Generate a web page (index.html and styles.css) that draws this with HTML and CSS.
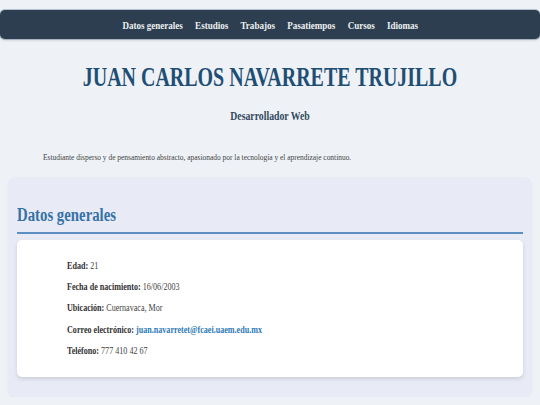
FILE: index.html
```html
<!DOCTYPE html>
<html lang="es">
<head>
<meta charset="utf-8">
<title>Juan Carlos Navarrete Trujillo</title>
<link rel="stylesheet" href="styles.css">
</head>
<body>
<nav class="topnav">
  <ul class="topnav-list">
    <li><a class="topnav-link" href="#datos">Datos generales</a></li>
    <li><a class="topnav-link" href="#estudios">Estudios</a></li>
    <li><a class="topnav-link" href="#trabajos">Trabajos</a></li>
    <li><a class="topnav-link" href="#pasatiempos">Pasatiempos</a></li>
    <li><a class="topnav-link" href="#cursos">Cursos</a></li>
    <li><a class="topnav-link" href="#idiomas">Idiomas</a></li>
  </ul>
</nav>
<header class="hero">
  <h1 class="hero-name">JUAN CARLOS NAVARRETE TRUJILLO</h1>
  <p class="hero-role">Desarrollador Web</p>
  <p class="hero-bio">Estudiante disperso y de pensamiento abstracto, apasionado por la tecnología y el aprendizaje continuo.</p>
</header>
<section class="panel" id="datos">
  <h2 class="panel-title"><span class="panel-title-text">Datos generales</span></h2>
  <div class="card">
    <p class="field"><strong class="field-label">Edad:</strong> 21</p>
    <p class="field"><strong class="field-label">Fecha de nacimiento:</strong> 16/06/2003</p>
    <p class="field"><strong class="field-label">Ubicación:</strong> Cuernavaca, Mor</p>
    <p class="field"><strong class="field-label">Correo electrónico:</strong> <a class="field-link" href="mailto:juan.navarretet@fcaei.uaem.edu.mx">juan.navarretet@fcaei.uaem.edu.mx</a></p>
    <p class="field"><strong class="field-label">Teléfono:</strong> 777 410 42 67</p>
  </div>
</section>
</body>
</html>
```
FILE: styles.css
```css
html, body {
  margin: 0;
  padding: 0;
}
body {
  background: #eef2f7;
  font-family: "Liberation Serif", "Times New Roman", serif;
  color: #333;
  overflow: hidden;
}

/* navigation */
.topnav {
  margin-top: 10px;
  height: 29px;
  background: #2c3e50;
  border-radius: 5px;
  box-shadow: 0 0 0 1px rgba(120, 140, 165, 0.45), 0 1px 3px rgba(0, 0, 0, 0.2);
  display: flex;
  align-items: center;
  justify-content: center;
}
.topnav-list {
  list-style: none;
  margin: 0;
  padding: 0;
  display: flex;
  gap: 15px;
  transform: scaleX(0.82);
}
.topnav-link {
  color: #ecf0f1;
  text-decoration: none;
  font-weight: bold;
  font-size: 11px;
  line-height: 14px;
  display: block;
  padding-top: 1px;
}

/* header */
.hero {
  padding-top: 22px;
}
.hero-name {
  margin: 0;
  font-size: 28px;
  line-height: 32px;
  font-weight: bold;
  color: #1f4e74;
  text-align: center;
  white-space: nowrap;
  transform: scaleX(0.713);
}
.hero-role {
  margin: 15px 0 0;
  font-size: 13px;
  line-height: 16px;
  font-weight: bold;
  color: #34495e;
  text-align: center;
  transform: scaleX(0.75);
}
.hero-bio {
  margin: 27px 0 0;
  padding-left: 43px;
  font-size: 9px;
  line-height: 12px;
  color: #444;
  white-space: nowrap;
  transform: scaleX(0.826);
  transform-origin: 43px center;
}

/* section */
.panel {
  margin: 14px 8px 0;
  padding: 27px 9px 20px;
  background: #e8eaf6;
  border-radius: 8px;
  box-shadow: 0 1px 3px rgba(0, 0, 0, 0.05);
}
.panel-title {
  margin: 0;
  padding-bottom: 6px;
  border-bottom: 2px solid #5b8fc2;
  font-size: 18px;
  line-height: 22px;
  font-weight: bold;
  color: #3672a6;
}
.panel-title-text {
  display: inline-block;
  transform: scaleX(0.822);
  transform-origin: left center;
}
.card {
  margin-top: 6px;
  padding: 20px 20px 20px 50px;
  background: #fff;
  border-radius: 5px;
  box-shadow: 0 2px 4px rgba(0, 0, 0, 0.12);
  display: flex;
  flex-direction: column;
  gap: 9.2px;
}
.field {
  margin: 0;
  font-size: 9.3px;
  line-height: 12px;
  color: #444;
  white-space: nowrap;
  transform: scaleX(0.87);
  transform-origin: left center;
}
.field-label {
  color: #333;
}
.field-link {
  color: #2f7bb8;
  font-weight: bold;
  text-decoration: none;
}
```
